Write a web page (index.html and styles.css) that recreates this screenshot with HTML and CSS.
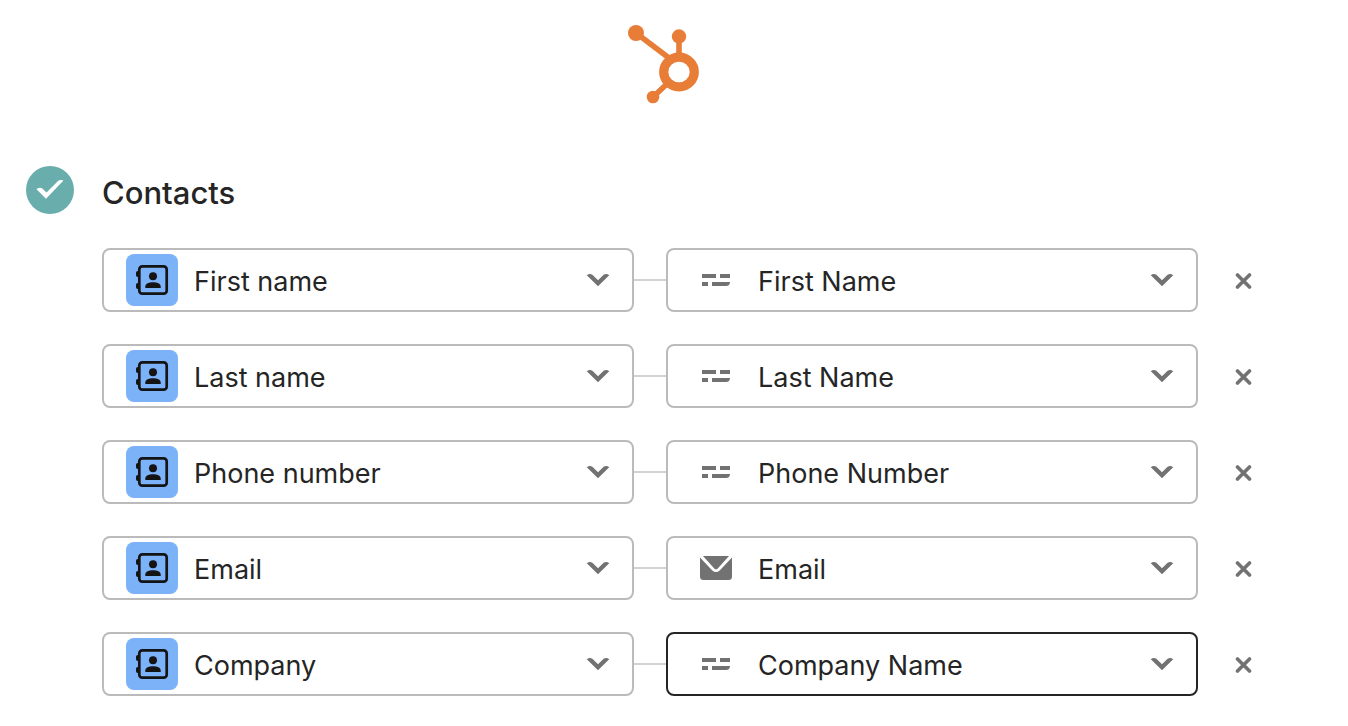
FILE: index.html
```html
<!DOCTYPE html>
<html lang="en">
<head>
    <meta charset="UTF-8">
    <meta name="viewport" content="width=device-width, initial-scale=1.0">
    <title>Contacts field mapping</title>
    <link rel="stylesheet" href="styles.css">
</head>
<body>
    <!-- Shared icons -->
    <svg class="sprite" aria-hidden="true">
        <symbol id="contact" viewBox="0 0 52 52">
            <rect x="13.3" y="12.3" width="27.4" height="27.4" rx="3" fill="none" stroke="#141414" stroke-width="2.7"/>
            <path d="M13 17h-1.2a1.8 1.8 0 0 0-1.8 1.8v2.4a1.8 1.8 0 0 0 1.8 1.8H13zM13 29h-1.2a1.8 1.8 0 0 0-1.8 1.8v2.4a1.8 1.8 0 0 0 1.8 1.8H13z" fill="#141414"/>
            <circle cx="27" cy="22.3" r="4" fill="#141414"/>
            <path d="M19.300 34v-1.5c0-3 4-4.300 7.700-4.300s7.700 1.300 7.700 4.300V34z" fill="#141414"/>
        </symbol>
        <symbol id="text" viewBox="0 0 32 24">
            <path d="M2 6h14v4H2zM20 6h10v4H20zM2 14h6v4H2zM12 14h18c0 2.500-1.500 4-4 4H12z" fill="#727272"/>
        </symbol>
        <symbol id="mail" viewBox="0 0 32 24">
            <path d="M3 0h26l-11.500 12.700q-1.500 1.300-3 0z" fill="#727272"/>
            <path d="M0 1.600l12.300 12.800q3.700 3 7.400 0L32 1.600V20.500a3.500 3.500 0 0 1-3.500 3.500h-25A3.500 3.500 0 0 1 0 20.500z" fill="#727272"/>
        </symbol>
        <symbol id="chevron" viewBox="0 0 24 14">
            <path d="M.8 2.200Q3.600 0 6.400 1.800L12 7.200 17.600 1.800Q20.400 0 23.200 2.200L12 13.200z" fill="#727272"/>
        </symbol>
        <symbol id="close" viewBox="0 0 18 18">
            <path d="M3.500 3l12 12M15.500 3l-12 12" fill="none" stroke="#727272" stroke-width="3.600" stroke-linecap="round"/>
        </symbol>
    </svg>

    <main class="page">
        <svg class="logo" viewBox="0 0 72 80" role="img" aria-label="HubSpot">
            <g stroke="#e87d38" fill="none">
                <path d="M8 9l33 25M51 13v20M25 73l16-15" stroke-width="5.600"/>
                <ellipse cx="51" cy="48" rx="15.300" ry="14.800" stroke-width="9.200"/>
            </g>
            <g fill="#e87d38">
                <circle cx="8" cy="9" r="8"/>
                <circle cx="51" cy="12.500" r="7.200"/>
                <circle cx="25" cy="73" r="6.300"/>
            </g>
        </svg>

        <section>
            <header class="section-header">
                <svg class="status" viewBox="0 0 48 48" role="img" aria-label="Complete">
                    <circle cx="24" cy="24" r="24" fill="#6aadad"/>
                    <path d="M10.500 23.200Q13 21 16 22.200L20.500 26.600 32 15Q34.500 13 37.500 14.600L20 32.700z" fill="#fff"/>
                </svg>
                <h1>Contacts</h1>
            </header>

            <form class="mappings">
                <div class="mapping">
                    <div class="field">
                        <select aria-label="Source field 1"><option>First name</option></select>
                        <svg class="badge"><use href="#contact"/></svg>
                        <svg class="chevron"><use href="#chevron"/></svg>
                    </div>
                    <span class="connector"></span>
                    <div class="field">
                        <select aria-label="HubSpot field 1"><option>First Name</option></select>
                        <svg class="type"><use href="#text"/></svg>
                        <svg class="chevron"><use href="#chevron"/></svg>
                    </div>
                    <button class="remove" type="button" aria-label="Remove first name"><svg><use href="#close"/></svg></button>
                </div>

                <div class="mapping">
                    <div class="field">
                        <select aria-label="Source field 2"><option>Last name</option></select>
                        <svg class="badge"><use href="#contact"/></svg>
                        <svg class="chevron"><use href="#chevron"/></svg>
                    </div>
                    <span class="connector"></span>
                    <div class="field">
                        <select aria-label="HubSpot field 2"><option>Last Name</option></select>
                        <svg class="type"><use href="#text"/></svg>
                        <svg class="chevron"><use href="#chevron"/></svg>
                    </div>
                    <button class="remove" type="button" aria-label="Remove last name"><svg><use href="#close"/></svg></button>
                </div>

                <div class="mapping">
                    <div class="field">
                        <select aria-label="Source field 3"><option>Phone number</option></select>
                        <svg class="badge"><use href="#contact"/></svg>
                        <svg class="chevron"><use href="#chevron"/></svg>
                    </div>
                    <span class="connector"></span>
                    <div class="field">
                        <select aria-label="HubSpot field 3"><option>Phone Number</option></select>
                        <svg class="type"><use href="#text"/></svg>
                        <svg class="chevron"><use href="#chevron"/></svg>
                    </div>
                    <button class="remove" type="button" aria-label="Remove phone number"><svg><use href="#close"/></svg></button>
                </div>

                <div class="mapping">
                    <div class="field">
                        <select aria-label="Source field 4"><option>Email</option></select>
                        <svg class="badge"><use href="#contact"/></svg>
                        <svg class="chevron"><use href="#chevron"/></svg>
                    </div>
                    <span class="connector"></span>
                    <div class="field">
                        <select aria-label="HubSpot field 4"><option>Email</option></select>
                        <svg class="type"><use href="#mail"/></svg>
                        <svg class="chevron"><use href="#chevron"/></svg>
                    </div>
                    <button class="remove" type="button" aria-label="Remove email"><svg><use href="#close"/></svg></button>
                </div>

                <div class="mapping">
                    <div class="field">
                        <select aria-label="Source field 5"><option>Company</option></select>
                        <svg class="badge"><use href="#contact"/></svg>
                        <svg class="chevron"><use href="#chevron"/></svg>
                    </div>
                    <span class="connector"></span>
                    <div class="field active">
                        <select aria-label="HubSpot field 5"><option>Company Name</option></select>
                        <svg class="type"><use href="#text"/></svg>
                        <svg class="chevron"><use href="#chevron"/></svg>
                    </div>
                    <button class="remove" type="button" aria-label="Remove company"><svg><use href="#close"/></svg></button>
                </div>
            </form>
        </section>
    </main>
</body>
</html>
```
FILE: styles.css
```css
* {
    box-sizing: border-box;
}

body {
    margin: 0;
    background-color: #fff;
    color: #252525;
    font-family: Inter, "Liberation Sans", sans-serif;
}

.sprite {
    display: none;
}

.page {
    padding: 24px 46px 30px 26px;
}

.logo {
    display: block;
    width: 72px;
    height: 80px;
    margin: 0 auto 62px;
}

.section-header {
    display: flex;
    align-items: center;
    gap: 28px;
    margin-bottom: 34px;
}

.status {
    width: 48px;
    height: 48px;
}

h1 {
    margin: 0;
    padding-top: 6px;
    font-size: 31px;
    line-height: 40px;
    font-weight: 500;
}

.mappings {
    display: grid;
    gap: 32px;
    padding-left: 76px;
}

.mapping {
    display: grid;
    grid-template-columns: 1fr 32px 1fr 104px;
    align-items: center;
}

/* The icons sit in the same grid row, on top of the select */
.field {
    display: grid;
    grid-template-columns: 92px 1fr 72px;
    align-items: center;
    justify-items: center;
}

.field select {
    grid-area: 1 / 1 / 2 / 4;
    width: 100%;
    height: 64px;
    padding: 2px 72px 0 90px;
    border: 2px solid #bbb;
    border-radius: 8px;
    background-color: #fff;
    color: inherit;
    font-family: inherit;
    font-size: 27px;
    appearance: none;
    cursor: pointer;
}

.field.active select {
    border-color: #252525;
}

.field svg {
    grid-row: 1;
    z-index: 1;
    pointer-events: none;
}

.badge {
    grid-column: 1;
    justify-self: end;
    width: 52px;
    height: 52px;
    margin-right: 16px;
    border-radius: 8px;
    background-color: #7cb2f8;
}

.type {
    grid-column: 1;
    justify-self: end;
    width: 32px;
    height: 24px;
    margin-right: 26px;
}

.chevron {
    grid-column: 3;
    width: 24px;
    height: 14px;
}

.connector {
    height: 2px;
    background-color: #d3d3d3;
}

.remove {
    display: flex;
    align-items: center;
    justify-content: center;
    width: 90px;
    height: 64px;
    padding: 2px 0 0;
    border: 0;
    background: none;
    cursor: pointer;
}

.remove svg {
    width: 18px;
    height: 18px;
}
```
